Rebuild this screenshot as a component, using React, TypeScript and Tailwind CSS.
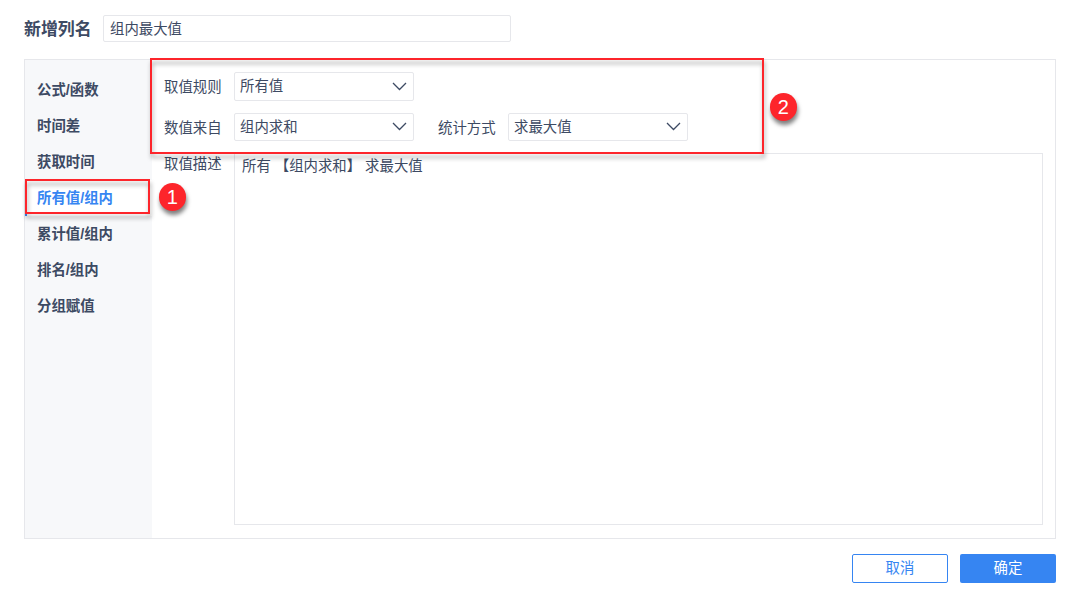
import React from "react";

const menu = ["公式/函数", "时间差", "获取时间", "所有值/组内", "累计值/组内", "排名/组内", "分组赋值"];
const ACTIVE = 3;

function Select({ value, className }: { value: string; className: string }) {
  return (
    <div className={`flex w-[180px] items-center justify-between rounded-[2px] border border-[#e6e7eb] bg-white pr-[6px] pl-[5px] ${className}`}>
      <span className="pb-px">{value}</span>
      <svg width="15" height="9" viewBox="0 0 15 9" fill="none" stroke="#3d4a63" strokeWidth="1.3" className="-mt-px">
        <path d="M1 1 7.5 7.5 14 1" />
      </svg>
    </div>
  );
}

function Label({ children, className = "" }: { children: React.ReactNode; className?: string }) {
  return <span className={`w-[70px] shrink-0 whitespace-nowrap ${className}`}>{children}</span>;
}

function Badge({ n, className }: { n: number; className: string }) {
  return (
    <div
      className={`absolute flex size-[27.5px] items-center justify-center rounded-full bg-[#fd252b] font-['Liberation_Sans',Arial,sans-serif] text-[20px] leading-none text-white shadow-[1px_4px_4px_rgba(0,0,0,0.5)] ${className}`}
    >
      {n}
    </div>
  );
}

function Outline({ className }: { className: string }) {
  return (
    <div className={`pointer-events-none absolute border-2 border-[#fd252b] drop-shadow-[1px_4px_2px_rgba(0,0,0,0.35)] ${className}`} />
  );
}

export default function App() {
  return (
    <div className="relative flex h-[589px] w-[1079px] flex-col overflow-hidden bg-white pt-[15px] pr-[23px] pl-6 font-['Liberation_Sans','Noto_Sans_CJK_SC',sans-serif] text-[14.4px] leading-5 text-[#3d4a63]">
      <header className="flex h-[27px] items-center">
        <h1 className="w-[79px] shrink-0 pt-0.5 text-[16.9px] font-bold whitespace-nowrap">新增列名</h1>
        <div className="flex h-[27px] w-[408px] items-center rounded-[2px] border border-[#e6e7eb] px-1.5">组内最大值</div>
      </header>

      <main className="mt-[17px] flex h-[480px] shrink-0 border border-[#e6e7eb]">
        <nav className="w-[127px] shrink-0 bg-[#f7f8fa] pt-3 font-bold">
          {menu.map((item, i) => (
            <div
              key={item}
              className={`flex h-9 items-center border-l-2 pl-[10px] ${i === ACTIVE ? "border-[#3685f2] bg-white text-[#3685f2]" : "border-transparent"}`}
            >
              {item}
            </div>
          ))}
        </nav>
        <section className="flex flex-1 flex-col gap-3 pt-3 pr-3 pb-[13px] pl-3">
          <div className="flex items-center">
            <Label>取值规则</Label>
            <Select value="所有值" className="h-[29px]" />
          </div>
          <div className="flex items-center">
            <Label className="pt-px">数值来自</Label>
            <Select value="组内求和" className="h-7" />
            <span className="ml-6 w-[70px] pt-px whitespace-nowrap">统计方式</span>
            <Select value="求最大值" className="h-7" />
          </div>
          <div className="flex flex-1">
            <Label className="pt-px">取值描述</Label>
            <div className="flex-1 border border-[#e6e7eb] px-[7px] pt-0.5 whitespace-pre">所有 【组内求和】 求最大值</div>
          </div>
        </section>
      </main>

      <footer className="mt-[15px] flex justify-end gap-3">
        <button className="h-[29px] w-24 rounded-[2px] border border-[#3685f2] bg-white pb-px text-[#3685f2]">取消</button>
        <button className="h-[29px] w-24 rounded-[2px] bg-[#3685f2] pb-px text-white">确定</button>
      </footer>

      <Outline className="top-[58px] left-[150px] h-24 w-[614px]" />
      <Outline className="top-[179px] left-[25px] h-[35px] w-[125px]" />
      <Badge n={1} className="top-[183px] left-[158.5px]" />
      <Badge n={2} className="top-[93px] left-[769.5px]" />
    </div>
  );
}
